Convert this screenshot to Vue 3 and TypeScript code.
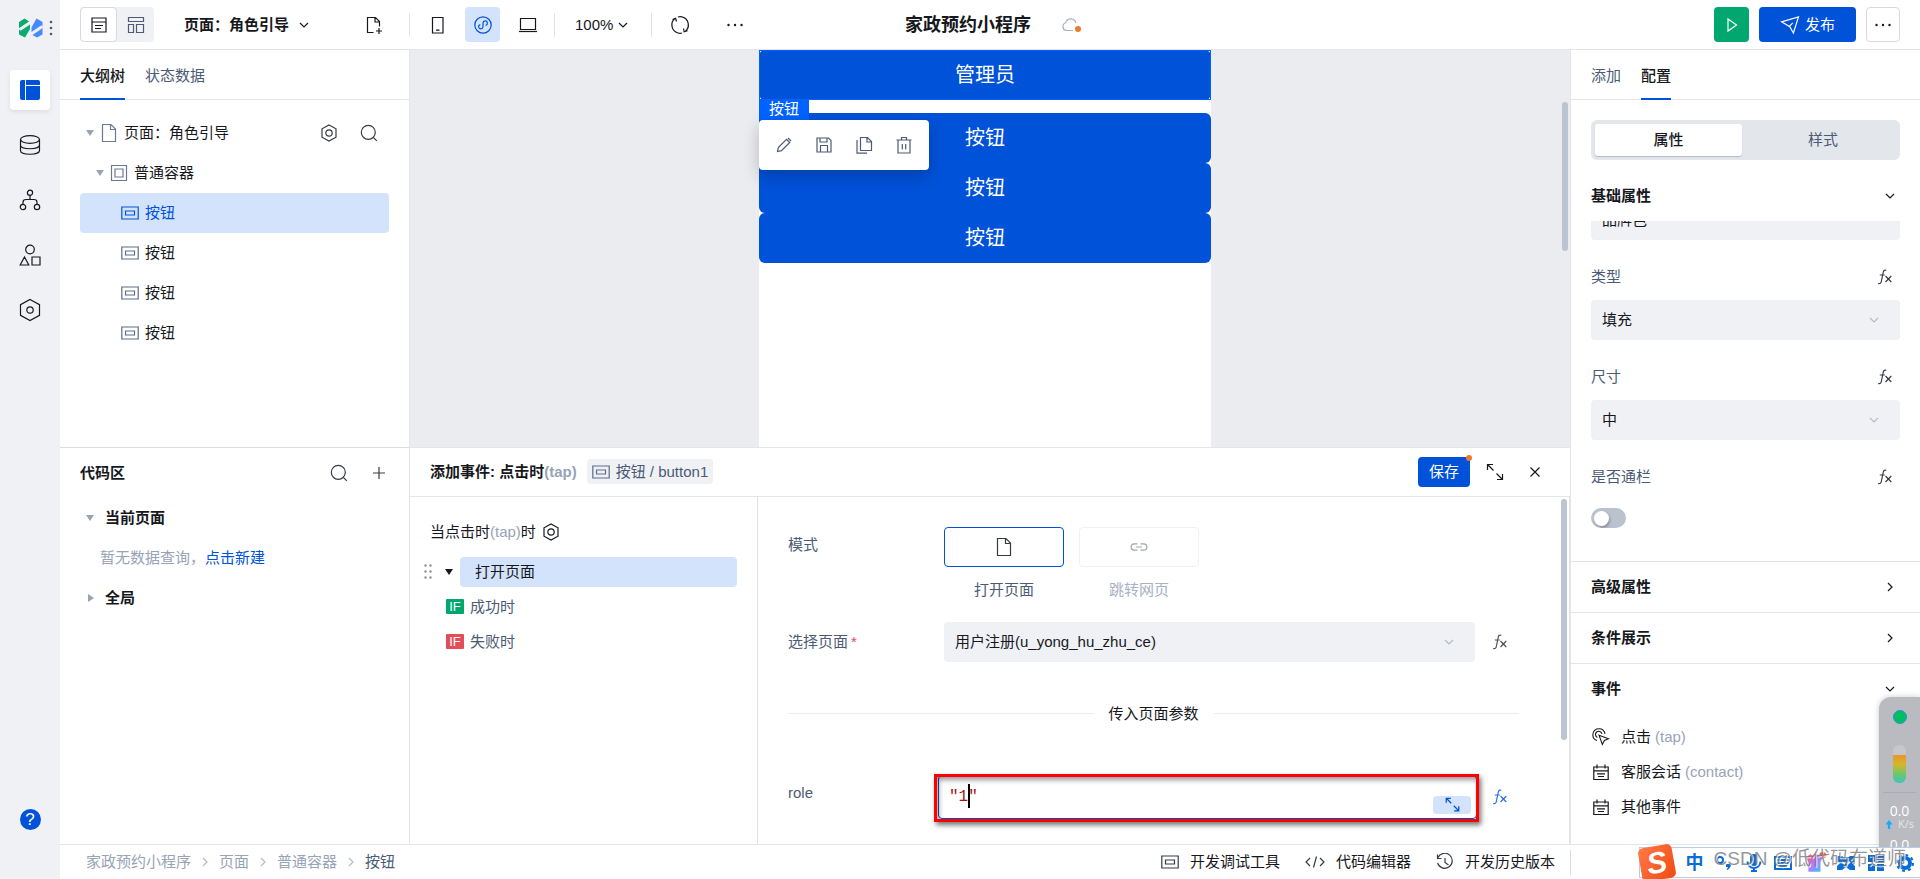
<script setup lang="ts">
import { ref } from 'vue'

interface TreeItem { id: number; label: string }
interface EventItem { icon: string; label: string; code: string }

const treeButtons: TreeItem[] = [1, 2, 3, 4].map((id) => ({ id, label: '按钮' }))
const selectedId = ref(1)
const canvasButtons = ['按钮', '按钮', '按钮']
const railIcons = [
  { icon: 'db', label: '数据' },
  { icon: 'flow', label: '流程' },
  { icon: 'shapes', label: '组件' },
  { icon: 'hexagon', label: '设置' },
]
const nodeActions = [
  { icon: 'pencil', label: '编辑' },
  { icon: 'save', label: '保存' },
  { icon: 'copy', label: '复制' },
  { icon: 'trash', label: '删除' },
]
const crumbs = ['家政预约小程序', '页面', '普通容器']
const events: EventItem[] = [
  { icon: 'tap', label: '点击', code: '(tap)' },
  { icon: 'calendar', label: '客服会话', code: '(contact)' },
  { icon: 'calendar', label: '其他事件', code: '' },
]
const fillType = ref('填充')
const size = ref('中')
const fullWidth = ref(false)
const targetPage = ref('用户注册(u_yong_hu_zhu_ce)')
const role = ref('"1"')
</script>

<template>
  <svg class="sprite" aria-hidden="true">
    <symbol id="list" viewBox="0 0 18 18"><path d="M2 2h14v14H2zM2 6h14M5 9.500h8M5 12.500h6" /></symbol>
    <symbol id="blocks" viewBox="0 0 18 18"><path d="M1.500 1.500h15v4h-15zM1.500 8.500h5v8h-5zM9.500 8.500h7v8h-7z" /></symbol>
    <symbol id="down" viewBox="0 0 12 12"><path d="M2 4l4 4 4-4" /></symbol>
    <symbol id="right" viewBox="0 0 12 12"><path d="M4 2l4 4-4 4" /></symbol>
    <symbol id="docadd" viewBox="0 0 18 18"><path d="M8.500 16.500H2.500v-15h8l4 4v5M10 1.500v4.500h4.500M14 12v6M11 15h6" /></symbol>
    <symbol id="phone" viewBox="0 0 18 18"><path d="M3.500 1.500h10.500v15.500H3.500zM7 14.200h3.500" /></symbol>
    <symbol id="mini" viewBox="0 0 18 18"><circle cx="9" cy="9" r="8.200" /><path d="M6.300 8.600A2.200 2.200 0 1 0 9 11V7a2.200 2.200 0 1 1 2.700 2.300" /></symbol>
    <symbol id="laptop" viewBox="0 0 18 18"><path d="M1.500 2.500h15v11h-15z" /><path d="M0 15.500h18" /></symbol>
    <symbol id="refresh" viewBox="0 0 20 20"><path d="M5 3.500A8.300 8.300 0 0 0 8 18M12 1.900a8.300 8.300 0 0 1 3.300 14.500M8 2q2-.7 4-.1M8 18q2 .6 4 0M2.500 4.500L5.600 3.300 6.500 6.500M17.500 15.800l-3.300 1-.7-3.300" /></symbol>
    <symbol id="more" viewBox="0 0 18 18"><g fill="currentColor" stroke="none"><circle cx="2.500" cy="9" r="1.200" /><circle cx="9" cy="9" r="1.200" /><circle cx="15.500" cy="9" r="1.200" /></g></symbol>
    <symbol id="play" viewBox="0 0 18 18"><path d="M5 3l8.500 6L5 15z" /></symbol>
    <symbol id="send" viewBox="0 0 20 20"><path d="M1.500 6.800L18.500 2l-5.100 16-3.600-6.200zM8.800 11.800l4-4" /></symbol>
    <symbol id="page" viewBox="0 0 18 20"><path d="M2.500 1.500h8.500l4.500 4.500v12.500h-13zM10.500 1.500v5h5" /></symbol>
    <symbol id="box" viewBox="0 0 18 18"><path d="M1.500 1.500h15v15h-15zM5 5h8v8H5z" /></symbol>
    <symbol id="btn" viewBox="0 0 18 14"><path d="M.8 1h16.400v12H.800zM4.500 5h9v4h-9z" /></symbol>
    <symbol id="gear" viewBox="0 0 18 18"><path d="M9 1l7 3.800v8.400L9 17l-7-3.800V4.800z" /><circle cx="9" cy="9" r="3.200" /></symbol>
    <symbol id="hexagon" viewBox="0 0 22 24"><path d="M11 1.500l9.500 5.200v10.600L11 22.500l-9.500-5.200V6.700z" /><circle cx="11" cy="12" r="3.200" /></symbol>
    <symbol id="search" viewBox="0 0 18 18"><circle cx="8.300" cy="8.300" r="7" /><path d="M13.300 13.300l3.500 3.500" /></symbol>
    <symbol id="plus" viewBox="0 0 18 18"><path d="M9 3v12M3 9h12" /></symbol>
    <symbol id="db" viewBox="0 0 22 22"><ellipse cx="11" cy="5.500" rx="9.500" ry="3.800" /><path d="M1.500 5.500v11c0 5 19 5 19 0v-11M1.500 11c0 5 19 5 19 0" /></symbol>
    <symbol id="flow" viewBox="0 0 22 22"><circle cx="11" cy="3.800" r="2.600" /><circle cx="4" cy="18" r="2.700" /><circle cx="18" cy="18" r="2.700" /><path d="M11 6.400v4M4 15.200v-2q0-2.700 3-2.700h8q3 0 3 2.700v2" /></symbol>
    <symbol id="shapes" viewBox="0 0 22 22"><circle cx="11" cy="5.500" r="4.300" /><path d="M5.500 13l4.300 8H1.200zM13 13h8v8h-8z" /></symbol>
    <symbol id="pencil" viewBox="0 0 18 18"><path d="M2.500 15.500l.8-4L11.500 3.300l3.200 3.200L6.500 14.700zM13 2l3 3" /></symbol>
    <symbol id="save" viewBox="0 0 18 18"><path d="M2 2h11.500L16 4.500V16H2zM5 2v4h7V2M5.500 16v-6.500h7V16" /></symbol>
    <symbol id="copy" viewBox="0 0 18 18"><path d="M5.500 1.500h7l4 4v9h-11zM12 1.500V6h4.500M2 4v13.200h10" /></symbol>
    <symbol id="trash" viewBox="0 0 18 18"><path d="M1.500 4h15M3 4v13h12V4M6.500 4V1.500h5V4M7.300 8v5.500M10.700 8v5.500" /></symbol>
    <symbol id="cloud" viewBox="0 0 20 16"><path d="M12 13.500H5.500A4 4 0 0 1 4.800 5.700 5.200 5.200 0 0 1 14.900 6.200" /></symbol>
    <symbol id="expand" viewBox="0 0 18 18"><path d="M1.500 7V1.500H7M1.500 1.500l6 6M16.500 11v5.500H11M16.500 16.500l-6-6" /></symbol>
    <symbol id="close" viewBox="0 0 18 18"><path d="M4.500 4.500l9 9M13.500 4.500l-9 9" /></symbol>
    <symbol id="link" viewBox="0 0 18 18"><path d="M7.500 12.200H4.300a3.200 3.200 0 0 1 0-6.400h3.200M10.500 5.800h3.200a3.200 3.200 0 0 1 0 6.400h-3.200M6 9h6" /></symbol>
    <symbol id="fx" viewBox="0 0 18 18"><path d="M10.300 2.200C8 1.500 7.500 3 7.200 4.500L5.300 13.500C5 15.300 4 16 2.200 15.500M3.800 7h5M9.500 8l5.800 6M15.300 8l-5.800 6" /></symbol>
    <symbol id="tap" viewBox="0 0 20 20"><path d="M5.500 14A6.800 6.800 0 1 1 14.500 6.500M6 10.500A3.600 3.600 0 1 1 11 6.500M7.800 8l10.500 4-4.500 1.800-2.300 4.500z" /></symbol>
    <symbol id="calendar" viewBox="0 0 18 18"><path d="M1.800 4h14.400v12.500H1.800zM1.800 7.800h14.400M5 1.500v4M13 1.500v4M5 10.800h8M6 13.500h6" /></symbol>
    <symbol id="code" viewBox="0 0 20 18"><path d="M5 5L1 9l4 4M15 5l4 4-4 4M11.500 3.500l-3 11" /></symbol>
    <symbol id="history" viewBox="0 0 18 18"><path d="M2 4.500A7.500 7.500 0 1 1 1.600 10M1.500 1.500v4h4M9 5v4.500l3.500 2.500" /></symbol>
  </svg>

  <div class="app">
    <nav class="rail" aria-label="主导航">
      <div class="brand">
        <svg class="logo" viewBox="0 0 24 20"><path d="M0 4L5.500.5 11 4v7L6 19.500 0 16.500z" fill="#0aab72" /><path d="M12.500 9.500L17.500.5l6 3.500v12.500l-5.500 3-5.500-3z" fill="#458aff" /><path d="M1.500 11L12 4M11.500 16.500L22.500 9" stroke="#f0f1f5" stroke-width="3" stroke-linecap="round" /></svg>
        <svg class="dots3" viewBox="0 0 4 16"><circle cx="2" cy="2" r="1.300" /><circle cx="2" cy="8" r="1.300" /><circle cx="2" cy="14" r="1.300" /></svg>
      </div>
      <button class="rail-btn active" aria-label="页面编辑">
        <svg viewBox="0 0 20 20" class="filled"><path d="M2 0h3v20H2q-2 0-2-2V2Q0 0 2 0zM6 0h12q2 0 2 2v3H6zM6 6h14v12q0 2-2 2H6z" /></svg>
      </button>
      <button v-for="r in railIcons" :key="r.icon" class="rail-btn" :aria-label="r.label">
        <svg class="icon22"><use :href="'#' + r.icon" /></svg>
      </button>
      <button class="help" aria-label="帮助">?</button>
    </nav>

    <div class="shell">
      <header class="topbar">
        <div class="top-left">
          <div class="switch">
            <button class="on" aria-label="列表视图"><svg class="icon18"><use href="#list" /></svg></button>
            <button aria-label="布局视图"><svg class="icon18"><use href="#blocks" /></svg></button>
          </div>
          <button class="page-name">页面：角色引导<svg class="icon12"><use href="#down" /></svg></button>
          <button class="tool new-page" aria-label="新建页面"><svg class="icon18"><use href="#docadd" /></svg></button>
          <i class="sep sep-a"></i>
          <div class="devices">
            <button class="tool" aria-label="手机"><svg class="icon18"><use href="#phone" /></svg></button>
            <button class="tool on" aria-label="小程序"><svg class="icon18"><use href="#mini" /></svg></button>
            <button class="tool" aria-label="电脑"><svg class="icon18"><use href="#laptop" /></svg></button>
          </div>
          <i class="sep sep-b"></i>
          <button class="zoom">100%<svg class="icon12"><use href="#down" /></svg></button>
          <i class="sep sep-c"></i>
          <button class="tool" aria-label="刷新"><svg class="icon20"><use href="#refresh" /></svg></button>
          <button class="tool more" aria-label="更多"><svg class="icon18"><use href="#more" /></svg></button>
        </div>
        <div class="top-title">
          <h1>家政预约小程序</h1>
          <span class="cloud"><svg><use href="#cloud" /></svg></span>
        </div>
        <div class="top-right">
          <button class="run" aria-label="预览"><svg class="icon18"><use href="#play" /></svg></button>
          <button class="publish"><svg class="icon20"><use href="#send" /></svg>发布</button>
          <button class="outline" aria-label="更多操作"><svg class="icon18"><use href="#more" /></svg></button>
        </div>
      </header>

      <main class="body">
        <aside class="left">
          <section class="half">
            <div class="tabs"><button class="on">大纲树</button><button>状态数据</button></div>
            <div class="tree">
              <div class="node node-page">
                <i class="tri"></i><svg class="ic-page muted"><use href="#page" /></svg><span>页面：角色引导</span>
                <span class="node-tools">
                  <button class="bare" aria-label="页面设置"><svg class="icon18"><use href="#gear" /></svg></button>
                  <button class="bare" aria-label="搜索"><svg class="icon18"><use href="#search" /></svg></button>
                </span>
              </div>
              <div class="node node-box"><i class="tri"></i><svg class="icon18 muted"><use href="#box" /></svg><span>普通容器</span></div>
              <button v-for="t in treeButtons" :key="t.id" class="node node-btn" :class="{ on: t.id === selectedId }" @click="selectedId = t.id">
                <svg class="ic-btn"><use href="#btn" /></svg><span>{{ t.label }}</span>
              </button>
            </div>
          </section>
          <section class="half code-area">
            <div class="code-head">
              <h2>代码区</h2>
              <span class="node-tools">
                <button class="bare" aria-label="搜索代码"><svg class="icon18"><use href="#search" /></svg></button>
                <button class="bare" aria-label="新增代码"><svg class="icon18"><use href="#plus" /></svg></button>
              </span>
            </div>
            <div class="code-row"><i class="tri"></i><b>当前页面</b></div>
            <p class="empty">暂无数据查询，<a href="#new">点击新建</a></p>
            <div class="code-row"><i class="tri side"></i><b>全局</b></div>
          </section>
        </aside>

        <div class="center">
          <section class="half canvas">
            <div class="device">
              <div class="picked">
                <button class="app-btn">管理员</button>
                <div class="overlay">
                  <span class="tag">按钮</span>
                  <div class="actions">
                    <button v-for="a in nodeActions" :key="a.icon" class="bare" :aria-label="a.label"><svg class="icon18"><use :href="'#' + a.icon" /></svg></button>
                  </div>
                </div>
              </div>
              <button v-for="(b, i) in canvasButtons" :key="i" class="app-btn">{{ b }}</button>
            </div>
            <i class="thumb canvas-thumb"></i>
          </section>

          <section class="half events">
            <div class="ev-head">
              <h2>添加事件: 点击时<span>(tap)</span></h2>
              <span class="chip"><svg class="ic-btn"><use href="#btn" /></svg>按钮 / button1</span>
              <span class="ev-tools">
                <button class="save">保存</button>
                <button class="bare" aria-label="展开"><svg class="icon18"><use href="#expand" /></svg></button>
                <button class="bare" aria-label="关闭"><svg class="icon18"><use href="#close" /></svg></button>
              </span>
            </div>
            <div class="ev-body">
              <div class="ev-list">
                <div class="when"><span>当点击时<em>(tap)</em>时</span><svg class="icon18"><use href="#gear" /></svg></div>
                <div class="action-row">
                  <svg class="grip" viewBox="0 0 8 15"><circle v-for="n in 6" :key="n" :cx="n % 2 ? 1.5 : 6.5" :cy="1.5 + Math.floor((n - 1) / 2) * 6" r="1.200" /></svg>
                  <i class="tri dark"></i>
                  <button class="action">打开页面</button>
                </div>
                <div class="branch"><b class="if ok">IF</b>成功时</div>
                <div class="branch"><b class="if bad">IF</b>失败时</div>
              </div>
              <form class="ev-form" @submit.prevent>
                <div class="row mode-row">
                  <span class="label">模式</span>
                  <div class="field modes">
                    <label class="mode on"><button type="button" aria-label="打开页面"><svg class="ic-page"><use href="#page" /></svg></button>打开页面</label>
                    <label class="mode off"><button type="button" aria-label="跳转网页" disabled><svg class="icon18"><use href="#link" /></svg></button>跳转网页</label>
                  </div>
                </div>
                <div class="row">
                  <label class="label" for="target">选择页面<sup>*</sup></label>
                  <div class="field"><div class="select"><select id="target" v-model="targetPage"><option>用户注册(u_yong_hu_zhu_ce)</option></select><svg class="icon12"><use href="#down" /></svg></div></div>
                  <button type="button" class="bare fx" aria-label="选择页面表达式"><svg class="icon18"><use href="#fx" /></svg></button>
                </div>
                <div class="divider"><span>传入页面参数</span></div>
                <div class="row role-row">
                  <label class="label" for="role">role</label>
                  <div class="code-field">
                    <input id="role" v-model="role" type="text" />
                    <i class="caret"></i>
                    <button type="button" class="grow" aria-label="放大编辑"><svg><use href="#expand" /></svg></button>
                    <i class="highlight"></i>
                  </div>
                  <button type="button" class="bare fx blue" aria-label="role 表达式"><svg class="icon18"><use href="#fx" /></svg></button>
                </div>
              </form>
              <i class="thumb form-thumb"></i>
            </div>
          </section>
        </div>

        <aside class="right">
          <div class="tabs"><button>添加</button><button class="on">配置</button></div>
          <div class="segmented"><button class="on">属性</button><button>样式</button></div>
          <button class="section first">基础属性<svg class="icon12"><use href="#down" /></svg></button>
          <div class="clipped"><div class="select"><select aria-label="品牌"><option>品牌色</option></select></div></div>
          <div class="prop">
            <div class="prop-head"><label for="type">类型</label><button class="bare" aria-label="类型表达式"><svg class="icon18"><use href="#fx" /></svg></button></div>
            <div class="select"><select id="type" v-model="fillType"><option>填充</option></select><svg class="icon12"><use href="#down" /></svg></div>
          </div>
          <div class="prop">
            <div class="prop-head"><label for="size">尺寸</label><button class="bare" aria-label="尺寸表达式"><svg class="icon18"><use href="#fx" /></svg></button></div>
            <div class="select"><select id="size" v-model="size"><option>中</option></select><svg class="icon12"><use href="#down" /></svg></div>
          </div>
          <div class="prop prop-toggle">
            <div class="prop-head"><label for="full">是否通栏</label><button class="bare" aria-label="是否通栏表达式"><svg class="icon18"><use href="#fx" /></svg></button></div>
            <input id="full" v-model="fullWidth" type="checkbox" class="toggle" />
          </div>
          <button class="section">高级属性<svg class="icon12"><use href="#right" /></svg></button>
          <button class="section">条件展示<svg class="icon12"><use href="#right" /></svg></button>
          <button class="section">事件<svg class="icon12"><use href="#down" /></svg></button>
          <ul class="event-list">
            <li v-for="e in events" :key="e.label"><svg class="icon18"><use :href="'#' + e.icon" /></svg>{{ e.label }} <span>{{ e.code }}</span></li>
          </ul>
        </aside>
      </main>

      <footer class="status">
        <nav class="crumbs" aria-label="面包屑">
          <template v-for="c in crumbs" :key="c"><a href="#crumb">{{ c }}</a><svg class="icon12"><use href="#right" /></svg></template>
          <span>按钮</span>
        </nav>
        <div class="dev-tools">
          <button><svg class="ic-btn"><use href="#btn" /></svg>开发调试工具</button>
          <button><svg class="icon20"><use href="#code" /></svg>代码编辑器</button>
          <button><svg class="icon18"><use href="#history" /></svg>开发历史版本</button>
        </div>
        <div class="status-end"></div>
      </footer>
    </div>

    <div class="monitor">
      <i class="lamp"></i>
      <i class="gauge"></i>
      <div class="net"><span>0.0</span><small><svg viewBox="0 0 8 10"><path d="M4 0l4 5H5.300v5H2.700V5H0z" /></svg>K/s</small><span>0.0</span></div>
    </div>

    <div class="ime">
      <span class="sogou">S</span>
      <b>中</b>
      <svg viewBox="0 0 18 18"><circle cx="5" cy="6" r="3" /><path class="solid" d="M11 10h5q0 4-4 6l-.5-1q1.500-1 1.500-2h-2z" /></svg>
      <svg viewBox="0 0 18 18"><rect class="solid" x="5" y="0" width="8" height="12" rx="4" /><path d="M2.500 7.500a6.500 6.500 0 0 0 13 0M9 14v3M6 17h6" /></svg>
      <svg viewBox="0 0 18 18"><path d="M1 3h16v12H1zM3.500 6h11M3.500 9h11M5 12h8" /></svg>
      <svg viewBox="0 0 20 20" class="skin"><defs><linearGradient id="skinfill" x1="0" y1="0" x2="1" y2="1"><stop offset="0" stop-color="#ff5a36" /><stop offset=".5" stop-color="#b37bff" /><stop offset="1" stop-color="#35c4ff" /></linearGradient></defs><path d="M1 5l5-3q3 3 6 0l5 3-2 4v9H4V9z" fill="url(#skinfill)" /><circle cx="17" cy="3" r="3" fill="#ff5630" /></svg>
      <svg viewBox="0 0 18 18"><path class="solid" d="M0 2h5l4 3 4-3h5v5l-3 2 3 3v4h-5l-4-3-4 3H0v-4l3-3-3-2z" /><path class="cut" d="M5 8l3 2M13 8l-3 2" /></svg>
      <svg viewBox="0 0 18 18"><path class="solid" d="M1 1h7v7H1zM10 1h7v7h-7zM1 10h7v7H1zM10 10h7v7h-7z" /></svg>
      <svg viewBox="0 0 18 18"><circle class="gearring" cx="9" cy="9" r="5" /><circle cx="9" cy="9" r="8" stroke-dasharray="3 3.280" /></svg>
    </div>
    <div class="watermark">CSDN @低代码布道师</div>
  </div>
</template>

<style>
html, body { margin: 0; overflow: hidden; }
</style>

<style scoped>
* { box-sizing: border-box; }
.sprite { position: absolute; width: 0; height: 0; }
.app {
  position: relative; display: flex; height: 100vh; overflow: hidden; background: #fff; color: #16181d;
  font: 15px/20px "Liberation Sans", "Noto Sans CJK SC", sans-serif;
}
button { font: inherit; color: inherit; border: 0; background: none; padding: 0; margin: 0; cursor: pointer; display: inline-flex; align-items: center; justify-content: center; white-space: nowrap; }
a { text-decoration: none; color: #0052d9; }
h1, h2, p, ul { margin: 0; padding: 0; }
svg { flex: none; display: block; fill: none; stroke: currentColor; stroke-width: 1.2; }
.icon12 { width: 12px; height: 12px; }
.icon18 { width: 18px; height: 18px; }
.icon20 { width: 20px; height: 20px; }
.icon22 { width: 22px; height: 24px; }
.ic-btn { width: 18px; height: 14px; color: #5c6c8a; }
.ic-page { width: 18px; height: 20px; }
.muted { color: #6b7a94; }

.rail { width: 60px; background: #f0f1f5; display: flex; flex-direction: column; align-items: center; flex: none; }
.brand { height: 70px; width: 100%; display: flex; align-items: flex-start; gap: 6px; padding: 18px 0 0 19px; }
.logo { width: 24px; height: 20px; stroke: none; }
.dots3 { width: 4px; height: 16px; margin-top: 2px; fill: #4b5b76; stroke: none; }
.rail-btn { width: 40px; height: 40px; margin-bottom: 15px; border-radius: 4px; }
.rail-btn.active { background: #fff; color: #0052d9; box-shadow: 0 2px 5px rgba(0, 0, 0, .08); }
.filled { width: 20px; height: 20px; fill: currentColor; stroke: none; }
.help { width: 21px; height: 21px; border-radius: 50%; background: #0052d9; color: #fff; font-size: 17px; margin: auto 0 49px; }

.shell { flex: 1; min-width: 0; display: flex; flex-direction: column; }
.topbar { height: 50px; flex: none; border-bottom: 1px solid #e3e5ea; display: grid; grid-template-columns: 1fr auto 1fr; align-items: center; padding: 0 20px; }
.top-left, .top-right, .top-title, .devices { display: flex; align-items: center; }
.switch { display: flex; background: #f0f1f5; border-radius: 4px; margin-right: 30px; color: #4b5b76; }
.switch button { width: 37px; height: 35px; border-radius: 4px; }
.switch .on { background: #fff; border: 1px solid #d5d9e3; color: #16181d; }
.page-name { font-weight: 700; gap: 9px; }
.tool { width: 35px; height: 35px; border-radius: 4px; }
.tool.on { background: #d4e3fc; color: #0052d9; }
.new-page { margin-left: 46px; }
.devices { gap: 10px; }
.sep { width: 1px; height: 24px; background: #dfe2e8; }
.sep-a { margin: 0 10px 0 18px; }
.sep-b { margin: 0 20px 0 9px; }
.sep-c { margin: 0 10px 0 22px; }
.zoom { gap: 4px; }
.more { margin-left: 20px; }
.top-title { gap: 30px; padding-left: 6px; }
h1 { font-size: 18px; line-height: 24px; font-weight: 700; }
.cloud { position: relative; width: 20px; height: 16px; color: #a6b1c4; }
.cloud svg { width: 20px; height: 16px; }
.cloud::after { content: ""; position: absolute; right: 0; bottom: 1px; width: 6px; height: 6px; border-radius: 50%; background: #ed7b2f; }
.top-right { justify-content: flex-end; gap: 10px; }
.top-right button { height: 35px; border-radius: 4px; }
.run { width: 35px; background: #00a870; color: #fff; }
.publish { width: 97px; background: #0052d9; color: #fff; gap: 5px; }
.outline { width: 34px; border: 1px solid #d5d9e3; }

.body { flex: 1; min-height: 0; display: flex; }
.half { flex: 1 1 0; min-height: 0; overflow: hidden; }
.left { width: 350px; flex: none; border-right: 1px solid #e3e5ea; display: flex; flex-direction: column; }
.tabs { height: 50px; padding: 0 20px; display: flex; gap: 20px; border-bottom: 1px solid #e3e5ea; color: #4b5b76; }
.tabs button { height: 50px; padding-top: 4px; border-bottom: 2px solid transparent; }
.tabs .on { color: #16181d; border-color: #0052d9; font-weight: 500; }
.tree { padding: 13px 20px 0; }
.node { height: 40px; display: flex; align-items: center; width: 100%; border-radius: 4px; }
.node-page { padding-left: 6px; gap: 6px; }
.node-box { padding-left: 16px; gap: 6px; }
.node-btn { justify-content: flex-start; padding-left: 41px; gap: 6px; }
.node-btn.on { background: #d4e3fc; color: #0052d9; }
.node-btn.on .ic-btn { color: #0052d9; }
.node-tools { margin-left: auto; display: flex; gap: 22px; padding-right: 11px; color: #363b45; }
.tri { border: 4px solid transparent; border-top: 6px solid #97a3b7; border-bottom: 0; flex: none; }
.tri.side { border: 4px solid transparent; border-left: 6px solid #97a3b7; border-right: 0; margin-left: 2px; }
.tri.dark { border-top-color: #16181d; }
.code-area { border-top: 1px solid #dadde5; padding: 0 20px; }
.code-head { display: flex; align-items: center; height: 50px; }
h2 { font-size: 15px; line-height: 20px; font-weight: 700; }
.code-head .node-tools { padding-right: 1px; }
.code-row { height: 40px; display: flex; align-items: center; padding-left: 6px; gap: 11px; }
.empty { height: 40px; line-height: 40px; padding-left: 20px; color: #97a3b7; }

.center { flex: 1; min-width: 0; display: flex; flex-direction: column; }
.canvas { background: #ebecf0; position: relative; display: flex; justify-content: center; padding-right: 10px; }
.device { width: 452px; background: #fff; }
.picked { position: relative; margin-bottom: 13px; }
.picked::after { content: ""; position: absolute; inset: 0; border: 1px solid #0062ff; pointer-events: none; }
.app-btn { width: 100%; height: 50px; background: #0052d9; color: #fff; font-size: 20px; border-radius: 6px; display: flex; }
.overlay { position: absolute; z-index: 1; left: 0; top: 49px; }
.tag { display: block; width: 50px; height: 21px; text-align: center; background: #0062ff; color: #fff; }
.actions { width: 170px; height: 50px; background: #fff; border-radius: 4px; display: flex; align-items: center; justify-content: space-between; padding: 0 16px; color: #4b5b76; box-shadow: 0 6px 16px rgba(0, 0, 0, .22); }
.thumb { position: absolute; width: 6px; border-radius: 3px; background: #bbc4d1; }
.canvas-thumb { right: 2px; top: 13%; height: 149px; }
.form-thumb { right: 2px; top: 2px; height: 241px; }

.events { border-top: 1px solid #e3e5ea; display: flex; flex-direction: column; }
.ev-head { height: 49px; flex: none; border-bottom: 1px solid #e3e5ea; display: flex; align-items: center; padding: 0 20px; }
.ev-head h2 span { color: #97a3b7; }
.chip { margin-left: 10px; height: 25px; padding: 0 5px; background: #f0f1f5; border-radius: 4px; display: flex; align-items: center; gap: 6px; color: #4b5b76; }
.ev-tools { margin-left: auto; display: flex; align-items: center; gap: 22px; padding-right: 6px; }
.save { position: relative; width: 52px; height: 30px; margin-right: -6px; border-radius: 4px; background: #0052d9; color: #fff; }
.save::after { content: ""; position: absolute; right: -2px; top: -2px; width: 6px; height: 6px; border-radius: 50%; background: #ed7b2f; }
.ev-body { flex: 1; min-height: 0; display: flex; position: relative; border-right: 1px solid #e3e5ea; }
.ev-list { width: 348px; flex: none; border-right: 1px solid #dfe2e8; padding: 20px 20px 0 14px; display: flex; flex-direction: column; gap: 5px; }
.when { height: 30px; padding-left: 6px; display: flex; align-items: center; gap: 6px; margin-bottom: 5px; }
.when em { font-style: normal; color: #97a3b7; }
.action-row { height: 30px; display: flex; align-items: center; }
.grip { width: 8px; height: 15px; fill: #8b909b; stroke: none; margin-right: 13px; }
.action-row .tri { margin-right: 7px; }
.action { flex: 1; height: 30px; background: #d4e3fc; border-radius: 4px; justify-content: flex-start; padding-left: 15px; }
.branch { height: 30px; display: flex; align-items: center; gap: 6px; padding-left: 22px; color: #4b5b76; }
.if { width: 18px; height: 15px; font-size: 13px; line-height: 15px; font-weight: 400; text-align: center; color: #fff; border-radius: 1px; }
.ok { background: #00a870; }
.bad { background: #e34d59; }
.ev-form { flex: 1; min-width: 0; padding: 30px 50px 0 30px; overflow: hidden; }
.row { display: flex; align-items: center; }
.label { width: 150px; flex: none; color: #4b5b76; }
.label sup { color: #e34d59; font-size: 15px; line-height: 0; margin-left: 3px; vertical-align: baseline; }
.field { flex: 1; min-width: 0; padding: 0 6px; }
.mode-row { align-items: flex-start; margin-bottom: 22px; }
.mode-row .label, .role-row .label { align-self: flex-start; line-height: 36px; }
.modes { display: flex; gap: 15px; }
.mode { width: 120px; display: flex; flex-direction: column; gap: 13px; text-align: center; color: #4b5b76; }
.mode button { width: 100%; height: 40px; border: 1px solid #0052d9; border-radius: 4px; color: #363b45; }
.mode.off { color: #a6b1c4; }
.mode.off button { border-color: #f0f1f5; color: #a0a5ae; }
.fx { width: 38px; color: #4b5058; }
.fx.blue { color: #2a6fe8; }
.select { position: relative; display: flex; align-items: center; }
select { appearance: none; width: 100%; height: 40px; border: 0; border-radius: 4px; background: #f0f1f5; font: inherit; color: #16181d; padding: 0 40px 0 11px; }
.select .icon12 { position: absolute; right: 20px; color: #b4bac6; }
.divider { margin: 42px 0 51px; display: flex; align-items: center; gap: 15px; }
.divider::before, .divider::after { content: ""; flex: 1; height: 1px; background: #ebecf0; }
.code-field { flex: 1; position: relative; height: 44px; margin-right: 4px; }
.code-field input { display: block; width: 100%; height: 44px; border: 1px solid #0052d9; border-radius: 4px; outline: 0; padding: 0 50px 0 10px; font: 16px/24px "Liberation Mono", monospace; color: #a31515; background: #fff; }
.caret { position: absolute; left: 30px; top: 9px; width: 2px; height: 24px; background: #000; }
.grow { position: absolute; right: 6px; bottom: 5px; width: 38px; height: 18px; background: #d4e3fc; border-radius: 4px; color: #0052d9; }
.grow svg { width: 15px; height: 15px; stroke-width: 1.5; }
.highlight { position: absolute; inset: -1px -2px -3px -4px; border: 3px solid #f00; box-shadow: 2px 3px 5px rgba(0, 0, 0, .55), inset 2px 3px 5px rgba(0, 0, 0, .4); pointer-events: none; }

.right { width: 350px; flex: none; border-left: 1px solid #e3e5ea; overflow: hidden; }
.segmented { margin: 20px 20px 10px; height: 40px; padding: 4px; border-radius: 6px; background: #e3e6eb; display: grid; grid-template-columns: 147px 1fr; gap: 8px; color: #4b5b76; }
.segmented .on { background: #fff; color: #16181d; border-radius: 3px; box-shadow: 0 1px 1px #b4bccb; font-weight: 500; }
.section { width: 100%; height: 51px; border-top: 1px solid #e3e5ea; padding: 0 24px 0 20px; justify-content: space-between; font-weight: 700; }
.section.first { border-color: transparent; }
.clipped { height: 19px; margin: 0 20px; overflow: hidden; display: flex; align-items: flex-end; }
.clipped .select { flex: 1; }
.prop { padding: 27px 20px 0; }
.prop-head { height: 20px; display: flex; justify-content: space-between; align-items: center; margin-bottom: 13px; padding-right: 6px; color: #4b5b76; }
.prop-head button { color: #363b45; }
.prop-toggle { padding-bottom: 33px; }
.prop-toggle .prop-head { margin-bottom: 21px; }
.toggle { appearance: none; display: block; width: 35px; height: 20px; margin: 0; border-radius: 10px; background: #bbc2cf; overflow: hidden; }
.toggle::before { content: ""; display: block; width: 15px; height: 15px; margin: 3px; border-radius: 50%; background: #fff; box-shadow: 1px 2px 3px rgba(0, 0, 0, .25); }
.toggle:checked { background: #0052d9; }
.event-list { list-style: none; padding: 5px 20px; }
.event-list li { height: 35px; display: flex; align-items: center; gap: 4px; }
.event-list svg { margin: 0 7px 0 1px; }
.event-list span { color: #97a3b7; }

.status { height: 35px; flex: none; border-top: 1px solid #e3e5ea; display: flex; align-items: center; padding-left: 26px; }
.crumbs { display: flex; align-items: center; gap: 8px; color: #4b5b76; }
.crumbs a { color: #97a3b7; }
.crumbs svg { color: #b4bac6; }
.dev-tools { margin-left: auto; display: flex; gap: 25px; padding-right: 15px; }
.dev-tools button { gap: 11px; }
.dev-tools svg { color: #363b45; }
.status-end { width: 350px; height: 25px; border-left: 1px solid #dadde5; }

.monitor { position: absolute; right: 0; bottom: 32px; width: 41px; height: 150px; overflow: hidden; border-radius: 12px 0 0 0; background: #b9bbc0; box-shadow: 0 0 6px rgba(0, 0, 0, .2); display: flex; flex-direction: column; align-items: center; color: #fff; }
.lamp { width: 14px; height: 14px; margin: 13px 0; border-radius: 50%; background: #00bf63; border: 1px solid #2d8fd0; flex: none; }
.gauge { width: 13px; height: 38px; margin: 8px 0 9px; border-radius: 6px; flex: none; background: linear-gradient(#c6c7cb 0 26%, #e8952e 26%, #d4b62a 52%, #6cc86a 76%, #3cc4c0); }
.net { width: 33px; border-top: 1px solid #a9adb3; padding-top: 10px; display: flex; flex-direction: column; align-items: center; font: 14px/15px "Open Sans", sans-serif; }
.net small { font-size: 11px; line-height: 12px; display: flex; align-items: center; gap: 5px; margin-bottom: 7px; color: #e6e7e9; }
.net small svg { width: 8px; height: 9px; fill: #18aaff; stroke: none; }

.ime { position: absolute; right: 0; bottom: 1px; width: 281px; height: 31px; padding-right: 6px; background: #fff; border: 1px solid #b9cbe6; border-right: 0; display: flex; align-items: center; justify-content: space-between; color: #0a6cd6; }
.ime svg { width: 18px; height: 18px; stroke-width: 2; }
.ime .solid { fill: currentColor; stroke: none; }
.ime .cut { stroke: #fff; }
.ime .gearring { stroke-width: 4; }
.ime .skin { width: 22px; height: 22px; stroke: none; }
.ime b { font-size: 18px; }
.sogou { width: 34px; height: 34px; border-radius: 5px; background: linear-gradient(135deg, #ff7a45, #f04a14); color: #fff; font: italic 700 30px/34px "Liberation Sans", sans-serif; text-align: center; transform: rotate(-10deg); }
.watermark { position: absolute; right: 14px; bottom: 8px; font-size: 19px; line-height: 24px; color: rgba(110, 114, 120, .75); text-shadow: 1px 1px 0 rgba(255, 255, 255, .8); pointer-events: none; }
</style>
